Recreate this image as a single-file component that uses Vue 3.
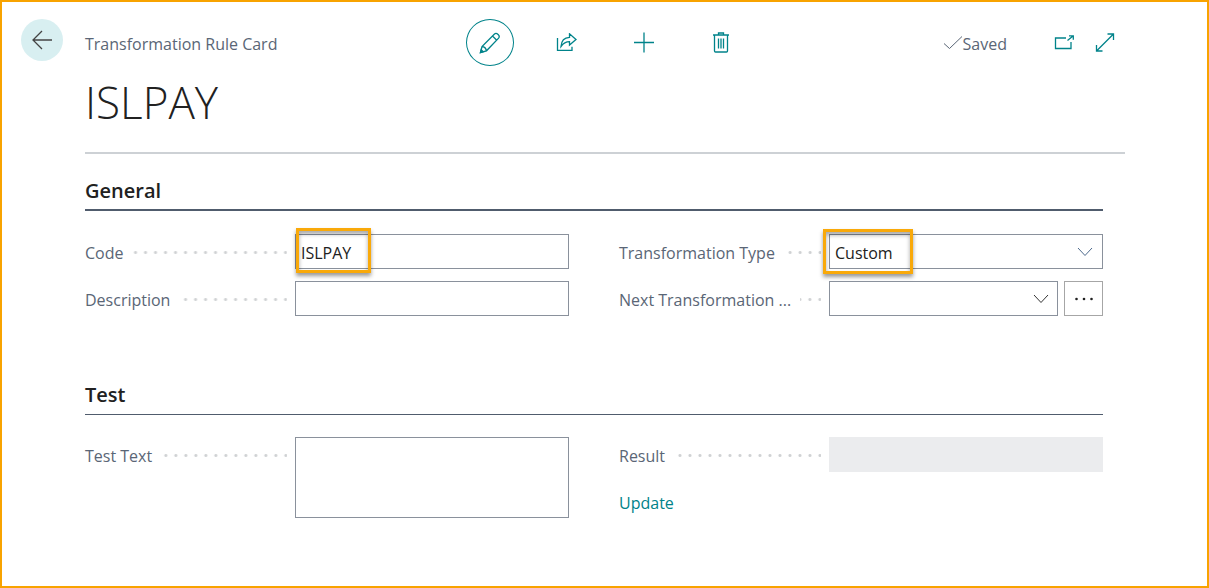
<script setup>
import { ref } from 'vue'

const code = ref('ISLPAY')
const description = ref('')
const type = ref('Custom')
const nextRule = ref('')
const testText = ref('')
const result = ref('')
</script>

<template>
  <main class="page">
    <header class="header">
      <button class="back" type="button" aria-label="Back">
        <svg width="22" height="20" viewBox="0 0 22 20">
          <path d="M21 10H2M11 1L2 10l9 9" />
        </svg>
      </button>
      <div class="bar">
        <span class="caption">Transformation Rule Card</span>
        <nav class="tools" aria-label="Card actions">
          <button class="tool tool--active" type="button" aria-label="Edit">
            <svg width="22" height="22" viewBox="0 0 22 22">
              <path d="M1.500 20.500l1.500-6L15.500 2q1.600-1.400 3.600.5t.5 3.600L7.500 18.800zM13.500 4l4.500 4.500M3 14.500q3.500.2 4.500 4.300" />
              <path class="solid" d="M1.500 20.500l.7-2.800 2 2z" />
            </svg>
          </button>
          <button class="tool" type="button" aria-label="Share">
            <svg width="22" height="20" viewBox="0 0 22 20">
              <path d="M1.500 5v12.300h14.500v-3.500" />
              <path d="M5 13.500C5.300 8.500 8 4.500 13.500 4.300V.8L20 6.500 13.500 12V8.700C9.500 8.700 7.500 10 5 13.500z" />
            </svg>
          </button>
          <button class="tool" type="button" aria-label="New">
            <svg width="22" height="22" viewBox="0 0 22 22">
              <path d="M11 .5v20M1 10.500h20" />
            </svg>
          </button>
          <button class="tool" type="button" aria-label="Delete">
            <svg width="18" height="22" viewBox="0 0 18 22">
              <path d="M1 3h16M6.500 3V1h5v2M2.500 3v16q0 1 1 1h11q1 0 1-1V3M6.500 6.500v10M9 6.500v10M11.500 6.500v10" />
            </svg>
          </button>
        </nav>
        <div class="status">
          <span class="saved">
            <svg width="20" height="16" viewBox="0 0 20 16">
              <path d="M1 8.500l5.500 5L19 1.500" />
            </svg>
            <span class="caption">Saved</span>
          </span>
          <button class="mini" type="button" aria-label="Open in new window">
            <svg width="20" height="16" viewBox="0 0 20 16">
              <path d="M12 3H1.500v10.500H17V7M13.500 5.500L19 1M15 .8h4.300v4" />
            </svg>
          </button>
          <button class="mini" type="button" aria-label="Expand">
            <svg width="20" height="20" viewBox="0 0 20 20">
              <path d="M1.500 18l17-17M12.500 1h6v6M1.500 12v6h6" />
            </svg>
          </button>
        </div>
      </div>
    </header>

    <div class="content">
      <h1 class="title">ISLPAY</h1>

      <section class="section">
        <h2 class="heading">General</h2>
        <div class="columns">
          <div class="column">
            <div class="field">
              <label class="label" for="code">Code</label>
              <div class="control">
                <input id="code" v-model="code" class="box" type="text" />
                <span class="mark mark--code"></span>
              </div>
            </div>
            <div class="field">
              <label class="label" for="description">Description</label>
              <div class="control">
                <input id="description" v-model="description" class="box" type="text" />
              </div>
            </div>
          </div>
          <div class="column">
            <div class="field">
              <label class="label" for="type">Transformation Type</label>
              <div class="control">
                <select id="type" v-model="type" class="box">
                  <option>Custom</option>
                </select>
                <svg class="chevron chevron--muted" width="16" height="10" viewBox="0 0 16 10">
                  <path d="M1 1l7 7.500L15 1" />
                </svg>
                <span class="mark mark--type"></span>
              </div>
            </div>
            <div class="field">
              <label class="label" for="next">Next Transformation ...</label>
              <div class="control control--lookup">
                <div class="picker">
                  <select id="next" v-model="nextRule" class="box">
                    <option value=""></option>
                  </select>
                  <svg class="chevron" width="16" height="10" viewBox="0 0 16 10">
                    <path d="M1 1l7 7.500L15 1" />
                  </svg>
                </div>
                <button class="more" type="button" aria-label="Choose a rule">
                  <svg width="20" height="4" viewBox="0 0 20 4">
                    <circle cx="2.500" cy="2" r="1.300" />
                    <circle cx="10" cy="2" r="1.300" />
                    <circle cx="17.500" cy="2" r="1.300" />
                  </svg>
                </button>
              </div>
            </div>
          </div>
        </div>
      </section>

      <section class="section section--thin">
        <h2 class="heading">Test</h2>
        <div class="columns">
          <div class="column">
            <div class="field">
              <label class="label" for="test-text">Test Text</label>
              <div class="control">
                <textarea id="test-text" v-model="testText" class="box box--tall"></textarea>
              </div>
            </div>
          </div>
          <div class="column">
            <div class="field">
              <label class="label" for="result">Result</label>
              <div class="control">
                <input id="result" v-model="result" class="box box--readonly" type="text" readonly />
              </div>
            </div>
            <a class="link" href="#">Update</a>
          </div>
        </div>
      </section>
    </div>
  </main>
</template>

<style>
body {
  margin: 0;
  background: #fff;
}
</style>

<style scoped>
* {
  box-sizing: border-box;
}

.page {
  min-height: 100vh;
  border: 2px solid #f8a300;
  background: #fff;
  color: #5a6676;
  font: 400 16px/24px "Open Sans", "Noto Sans", sans-serif;
}

svg {
  display: block;
  flex: none;
  fill: none;
  stroke: currentColor;
  stroke-width: 1.3;
}

button {
  display: flex;
  align-items: center;
  justify-content: center;
  padding: 0;
  border: 0;
  background: none;
  color: #00838a;
}

.header {
  display: flex;
  align-items: flex-start;
  gap: 22px;
  padding: 17px 82px 0 19px;
}

.back {
  flex: none;
  width: 42px;
  height: 42px;
  border-radius: 50%;
  background: #d8eff1;
  color: #444;
}

.bar {
  flex: 1;
  display: grid;
  grid-template-columns: 1fr auto 1fr;
  align-items: center;
}

.caption {
  padding-top: 2px;
}

.tools {
  display: flex;
  gap: 29px;
}

.tool {
  width: 48px;
  height: 47px;
  border-radius: 50%;
}

.tool--active {
  border: 1px solid #00838a;
}

.solid {
  fill: currentColor;
}

.status {
  display: flex;
  align-items: center;
  justify-content: flex-end;
  padding-right: 8px;
}

.saved {
  display: flex;
  align-items: center;
  margin-right: 45px;
}

.saved svg {
  stroke-width: 1;
}

.mini {
  width: 24px;
  height: 24px;
}

.mini + .mini {
  margin-left: 17px;
}

.content {
  padding: 0 82px 48px 83px;
}

.title {
  margin: 0;
  padding: 3px 0 17px;
  border-bottom: 2px solid #cdd1d5;
  color: #212121;
  font-size: 44px;
  font-weight: 300;
  line-height: 66px;
}

.section {
  padding: 22px 22px 0 0;
}

.heading {
  margin: 0 0 23px;
  padding-bottom: 3px;
  border-bottom: 2px solid #505c6d;
  color: #212121;
  font-size: 20px;
  font-weight: 600;
  line-height: 30px;
}

.section--thin {
  padding-top: 64px;
}

.section--thin .heading {
  margin-bottom: 22px;
  padding-bottom: 4px;
  border-bottom-width: 1px;
}

.columns {
  display: grid;
  grid-template-columns: 1fr 1fr;
  gap: 50px;
}

.column {
  display: flex;
  flex-direction: column;
  gap: 12px;
}

.field {
  display: grid;
  grid-template-columns: 202px 1fr;
  gap: 8px;
  align-items: start;
}

.label {
  display: flex;
  align-items: center;
  gap: 9px;
  height: 35px;
  padding-top: 2px;
  white-space: nowrap;
}

.label::after {
  content: "";
  flex: 1;
  height: 3px;
  background: radial-gradient(circle at center, #cfd1d3 1px, transparent 2px) right -4px center / 10px 3px repeat-x;
}

.control {
  position: relative;
}

.control--lookup {
  display: flex;
  gap: 6px;
}

.picker {
  position: relative;
  flex: 1;
}

.box {
  display: block;
  width: 100%;
  height: 35px;
  margin: 0;
  padding: 2px 5px 0;
  border: 1px solid #8a919c;
  border-radius: 0;
  outline: 0;
  appearance: none;
  background: #fff;
  color: #212121;
  font: inherit;
}

.box--tall {
  height: 81px;
  resize: none;
}

.box--readonly {
  border-color: #ebecee;
  background: #ebecee;
}

.chevron {
  position: absolute;
  top: 13px;
  right: 9px;
  color: #333;
  stroke-width: 1;
  pointer-events: none;
}

.chevron--muted {
  right: 10px;
  color: #4d6a8c;
}

.more {
  width: 39px;
  height: 35px;
  border: 1px solid #a6a6a6;
  color: #212121;
}

.more svg {
  fill: currentColor;
  stroke: none;
}

.mark {
  position: absolute;
  top: -6px;
  height: 45px;
  border: 3px solid #f9a90a;
  box-shadow: 0 3px 4px rgba(0, 0, 0, 0.4), inset 0 3px 4px rgba(0, 0, 0, 0.35);
  pointer-events: none;
}

.mark--code {
  left: 1px;
  width: 75px;
}

.mark--type {
  top: -5px;
  left: -6px;
  width: 90px;
}

.link {
  align-self: flex-start;
  padding-top: 7px;
  color: #00838a;
  text-decoration: none;
}
</style>
